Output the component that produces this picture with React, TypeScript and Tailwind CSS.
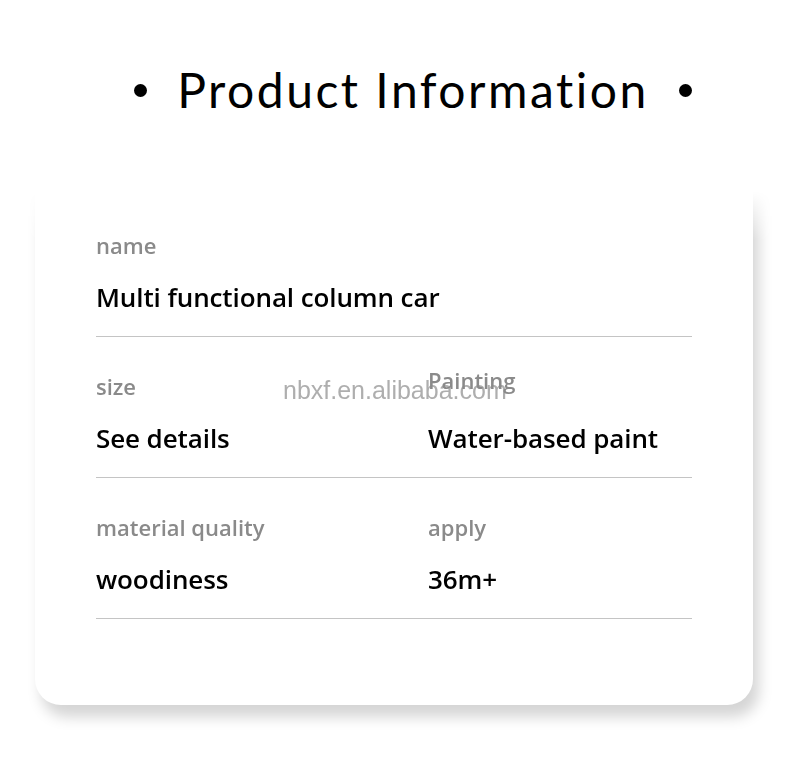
export default function App() {
  const rows = [
    [{ label: 'name', value: 'Multi functional column car' }],
    [
      { label: 'size', value: 'See details' },
      { label: 'Painting', value: 'Water-based paint', lift: true },
    ],
    [
      { label: 'material quality', value: 'woodiness' },
      { label: 'apply', value: '36m+' },
    ],
  ]

  return (
    <div className="w-[788px] h-[776px] bg-white overflow-hidden">
      {/* title */}
      <div className="pt-[58px] pl-[38px] flex items-center justify-center gap-[30px] font-['Lato',sans-serif] text-[48px] leading-[64px] text-black">
        <span className="w-[13px] h-[13px] rounded-full bg-black" />
        <span className="tracking-[2.5px]">Product Information</span>
        <span className="w-[13px] h-[13px] rounded-full bg-black" />
      </div>

      {/* card, top fades into the page */}
      <div className="mt-[54px] px-[35px] pb-[40px] [mask-image:linear-gradient(to_bottom,transparent_15px,black_65px)]">
        <div className="relative bg-white rounded-b-[26px] shadow-[6px_12px_14px_rgba(0,0,0,0.17)] pt-[52px] pb-[86px] px-[61px] font-['Open_Sans',sans-serif]">
          <div className="absolute left-[248px] top-[199px] font-['Liberation_Sans',sans-serif] text-[25px] leading-[30px] text-[#9a9a9a]/80">
            nbxf.en.alibaba.com
          </div>

          {rows.map((row, i) => (
            <div key={i} className="relative flex border-b border-[#c4c4c4] pb-[22px] mb-[32px] last:mb-0">
              {row.map((cell, j) => (
                <div key={j} className={row.length > 1 && j === 0 ? 'w-[332px]' : 'flex-1 whitespace-nowrap'}>
                  <div className={`relative mt-[2px] -mb-[2px] text-[22px] leading-[30px] font-semibold text-[#8a8a8a] ${cell.lift ? '-top-[6px]' : ''}`}>{cell.label}</div>
                  <div className="mt-[22px] text-[26px] leading-[34px] font-semibold text-black tracking-[-0.1px]">{cell.value}</div>
                </div>
              ))}
            </div>
          ))}
        </div>
      </div>
    </div>
  )
}
